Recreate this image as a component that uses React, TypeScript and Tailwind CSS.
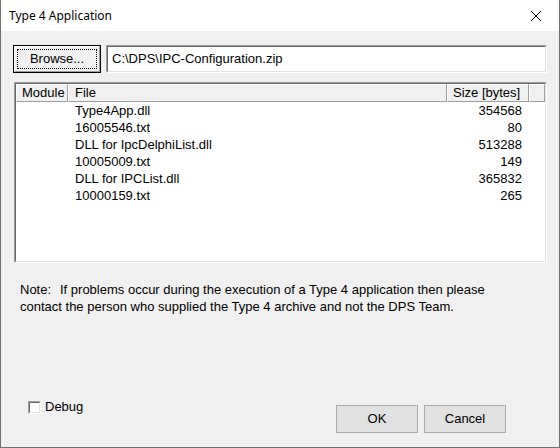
import React from 'react';

const files = [
  { name: 'Type4App.dll', size: '354568' },
  { name: '16005546.txt', size: '80' },
  { name: 'DLL for IpcDelphiList.dll', size: '513288' },
  { name: '10005009.txt', size: '149' },
  { name: 'DLL for IPCList.dll', size: '365832' },
  { name: '10000159.txt', size: '265' },
];

// classic raised 3D button
const Button: React.FC<{ label: string; className?: string }> = ({ label, className }) => (
  <div
    className={`border border-[#adadad] bg-[#e1e1e1] flex items-center justify-center ${className ?? ''}`}
  >
    {label}
  </div>
);

const App: React.FC = () => {
  return (
    <div
      className="w-[560px] h-[448px] bg-[#f0f0f0] border border-t-0 border-[#707070] flex flex-col text-[13px] text-black overflow-hidden"
      style={{ fontFamily: '"Liberation Sans", Arial, sans-serif' }}
    >
      {/* Title bar */}
      <div className="h-[31px] bg-white flex items-center justify-between shrink-0">
        <span className="pl-[8px] text-[12px]" style={{ fontFamily: '"Noto Sans", sans-serif' }}>
          Type 4 Application
        </span>
        <svg width="46" height="31" viewBox="0 0 46 31">
          <path d="M18 11 L28 21 M28 11 L18 21" stroke="#000" strokeWidth="1" />
        </svg>
      </div>

      <div className="flex flex-col pl-[12px] pr-[12px]">
        {/* Browse row */}
        <div className="flex mt-[14px] h-[28px]">
          <div className="w-[88px] h-[28px] border border-black shrink-0">
            <div className="h-full border border-t-white border-l-white border-r-[#a0a0a0] border-b-[#a0a0a0] bg-[#f0f0f0] p-[2px]">
              <div className="h-full border border-dotted border-black flex items-center justify-center">
                Browse...
              </div>
            </div>
          </div>
          <div className="ml-[5px] flex-1 border border-t-[#a0a0a0] border-l-[#a0a0a0] border-r-white border-b-white">
            <div className="h-full border border-t-[#696969] border-l-[#696969] border-r-[#e3e3e3] border-b-[#e3e3e3] bg-white flex items-center pl-[4px]">
              C:\DPS\IPC-Configuration.zip
            </div>
          </div>
        </div>

        {/* File list */}
        <div className="mt-[9px] ml-[1px] h-[181px] border border-t-[#a0a0a0] border-l-[#a0a0a0] border-r-white border-b-white">
          <div className="h-full border border-t-[#696969] border-l-[#696969] border-r-[#e3e3e3] border-b-[#e3e3e3] bg-white flex flex-col">
            <div className="flex h-[18px] shrink-0">
              <div className="w-[52px] border border-t-white border-l-white border-r-[#a0a0a0] border-b-[#a0a0a0] bg-[#f0f0f0] pl-[5px] leading-[16px]">
                Module
              </div>
              <div className="w-[379px] border border-t-white border-l-white border-r-[#a0a0a0] border-b-[#a0a0a0] bg-[#f0f0f0] pl-[6px] leading-[16px]">
                File
              </div>
              <div className="w-[82px] border border-t-white border-l-white border-r-[#a0a0a0] border-b-[#a0a0a0] bg-[#f0f0f0] pl-[5px] leading-[16px]">
                Size [bytes]
              </div>
              <div className="flex-1 border border-t-white border-l-white border-r-[#a0a0a0] border-b-[#a0a0a0] bg-[#f0f0f0]" />
            </div>
            <div className="flex flex-col">
              {files.map((f) => (
                <div key={f.name} className="flex h-[17px] leading-[18px]">
                  <div className="w-[52px]" />
                  <div className="w-[379px] pl-[7px]">{f.name}</div>
                  <div className="w-[82px] text-right pr-[7px]">{f.size}</div>
                </div>
              ))}
            </div>
          </div>
        </div>

        {/* Note */}
        <div className="mt-[18px] pl-[7px] leading-[17px]">
          <div>
            <span className="inline-block w-[40px]">Note:</span>
            If problems occur during the execution of a Type 4 application then please
          </div>
          <div>contact the person who supplied the Type 4 archive and not the DPS Team.</div>
        </div>

        {/* Bottom row */}
        <div className="flex mt-[85px]">
          <div className="flex items-start ml-[15px]">
            <div className="w-[13px] h-[13px] border border-t-[#a0a0a0] border-l-[#a0a0a0] border-r-white border-b-white mt-[1px]">
              <div className="h-full border border-t-[#696969] border-l-[#696969] border-r-[#e3e3e3] border-b-[#e3e3e3] bg-white" />
            </div>
            <span className="ml-[4px] leading-[14px]">Debug</span>
          </div>
          <div className="flex ml-auto mr-[41px] mt-[5px] gap-[6px]">
            <Button label="OK" className="w-[82px] h-[28px]" />
            <Button label="Cancel" className="w-[82px] h-[28px]" />
          </div>
        </div>
      </div>
    </div>
  );
};

export default App;
